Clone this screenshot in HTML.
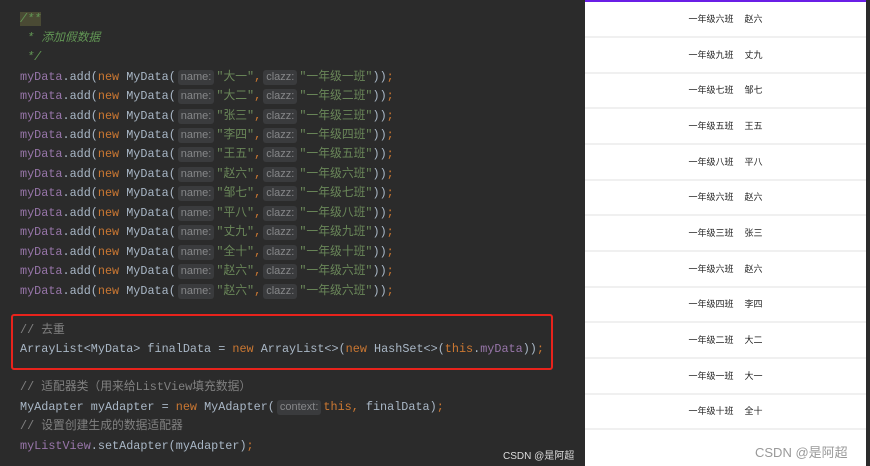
<!DOCTYPE html>
<html><head><meta charset="utf-8"><style>
body{margin:0;width:870px;height:466px;background:#2b2b2b;overflow:hidden;position:relative}
.code{position:absolute;left:20px;font-family:"Liberation Mono","Noto Sans CJK SC",monospace;font-size:11.8px;color:#a9b7c6;white-space:pre;line-height:16px}
.p{color:#9876aa}.k{color:#cc7832}.s{color:#6a8759}.c{color:#808080}.j{color:#629755;font-style:italic}
.h{display:inline-block;background:#3a3b3d;color:#868789;font-family:"Liberation Sans",sans-serif;font-size:11px;border-radius:3px;padding:0 3px;margin:0 2px;line-height:15px;font-style:normal}
.box{position:absolute;left:11px;top:314px;width:538px;height:52px;border:2px solid #e8231c;border-radius:3px}
.panel{position:absolute;left:585px;top:0;width:281px;height:466px;background:#fff;border-top:2px solid #6a1ee6;box-sizing:border-box}
.row{position:absolute;left:0;width:281px;height:34px;border-bottom:2px solid #f0f0f0;font-family:"Liberation Sans","Noto Sans CJK SC",sans-serif;font-size:9px;color:#222;text-align:center;line-height:34px}
.row b{font-weight:normal;margin-left:11px}
.wm{position:absolute;font-family:"Liberation Sans","Noto Sans CJK SC",sans-serif}
</style></head><body>
<div class="code" style="top:11px"><span class="j" style="background:#4a4a34">/**</span></div>
<div class="code j" style="top:30px"> * 添加假数据</div>
<div class="code j" style="top:49px"> */</div>
<div class="code" style="top:69px"><span class="p">myData</span>.add(<span class="k">new</span> MyData(<span class="h">name:</span><span class="s">"大一"</span><span class="k">,</span><span class="h">clazz:</span><span class="s">"一年级一班"</span>))<span class="k">;</span></div>
<div class="code" style="top:88px"><span class="p">myData</span>.add(<span class="k">new</span> MyData(<span class="h">name:</span><span class="s">"大二"</span><span class="k">,</span><span class="h">clazz:</span><span class="s">"一年级二班"</span>))<span class="k">;</span></div>
<div class="code" style="top:108px"><span class="p">myData</span>.add(<span class="k">new</span> MyData(<span class="h">name:</span><span class="s">"张三"</span><span class="k">,</span><span class="h">clazz:</span><span class="s">"一年级三班"</span>))<span class="k">;</span></div>
<div class="code" style="top:127px"><span class="p">myData</span>.add(<span class="k">new</span> MyData(<span class="h">name:</span><span class="s">"李四"</span><span class="k">,</span><span class="h">clazz:</span><span class="s">"一年级四班"</span>))<span class="k">;</span></div>
<div class="code" style="top:146px"><span class="p">myData</span>.add(<span class="k">new</span> MyData(<span class="h">name:</span><span class="s">"王五"</span><span class="k">,</span><span class="h">clazz:</span><span class="s">"一年级五班"</span>))<span class="k">;</span></div>
<div class="code" style="top:166px"><span class="p">myData</span>.add(<span class="k">new</span> MyData(<span class="h">name:</span><span class="s">"赵六"</span><span class="k">,</span><span class="h">clazz:</span><span class="s">"一年级六班"</span>))<span class="k">;</span></div>
<div class="code" style="top:185px"><span class="p">myData</span>.add(<span class="k">new</span> MyData(<span class="h">name:</span><span class="s">"邹七"</span><span class="k">,</span><span class="h">clazz:</span><span class="s">"一年级七班"</span>))<span class="k">;</span></div>
<div class="code" style="top:205px"><span class="p">myData</span>.add(<span class="k">new</span> MyData(<span class="h">name:</span><span class="s">"平八"</span><span class="k">,</span><span class="h">clazz:</span><span class="s">"一年级八班"</span>))<span class="k">;</span></div>
<div class="code" style="top:224px"><span class="p">myData</span>.add(<span class="k">new</span> MyData(<span class="h">name:</span><span class="s">"丈九"</span><span class="k">,</span><span class="h">clazz:</span><span class="s">"一年级九班"</span>))<span class="k">;</span></div>
<div class="code" style="top:244px"><span class="p">myData</span>.add(<span class="k">new</span> MyData(<span class="h">name:</span><span class="s">"全十"</span><span class="k">,</span><span class="h">clazz:</span><span class="s">"一年级十班"</span>))<span class="k">;</span></div>
<div class="code" style="top:263px"><span class="p">myData</span>.add(<span class="k">new</span> MyData(<span class="h">name:</span><span class="s">"赵六"</span><span class="k">,</span><span class="h">clazz:</span><span class="s">"一年级六班"</span>))<span class="k">;</span></div>
<div class="code" style="top:283px"><span class="p">myData</span>.add(<span class="k">new</span> MyData(<span class="h">name:</span><span class="s">"赵六"</span><span class="k">,</span><span class="h">clazz:</span><span class="s">"一年级六班"</span>))<span class="k">;</span></div>
<div class="box"></div>
<div class="code c" style="top:322px">// 去重</div>
<div class="code" style="top:341px">ArrayList&lt;MyData&gt; finalData = <span class="k">new</span> ArrayList&lt;&gt;(<span class="k">new</span> HashSet&lt;&gt;(<span class="k">this</span>.<span class="p">myData</span>))<span class="k">;</span></div>
<div class="code c" style="top:379px">// 适配器类（用来给ListView填充数据）</div>
<div class="code" style="top:399px">MyAdapter myAdapter = <span class="k">new</span> MyAdapter(<span class="h">context:</span><span class="k">this,</span> finalData)<span class="k">;</span></div>
<div class="code c" style="top:418px">// 设置创建生成的数据适配器</div>
<div class="code" style="top:438px"><span class="p">myListView</span>.setAdapter(myAdapter)<span class="k">;</span></div>
<div class="wm" style="left:503px;top:447px;font-size:10px;color:#ddd">CSDN @是阿超</div>
<div class="panel">
<div class="row" style="top:0">一年级六班<b>赵六</b></div>
<div class="row" style="top:36px">一年级九班<b>丈九</b></div>
<div class="row" style="top:71px">一年级七班<b>邹七</b></div>
<div class="row" style="top:107px">一年级五班<b>王五</b></div>
<div class="row" style="top:143px">一年级八班<b>平八</b></div>
<div class="row" style="top:178px">一年级六班<b>赵六</b></div>
<div class="row" style="top:214px">一年级三班<b>张三</b></div>
<div class="row" style="top:250px">一年级六班<b>赵六</b></div>
<div class="row" style="top:285px">一年级四班<b>李四</b></div>
<div class="row" style="top:321px">一年级二班<b>大二</b></div>
<div class="row" style="top:357px">一年级一班<b>大一</b></div>
<div class="row" style="top:392px">一年级十班<b>全十</b></div>
<div class="wm" style="left:170px;top:440px;font-size:13px;color:#999">CSDN @是阿超</div>
</div>
<div style="position:absolute;left:866px;top:0;width:4px;height:445px;background:#2b2b2b"></div>
</body></html>
